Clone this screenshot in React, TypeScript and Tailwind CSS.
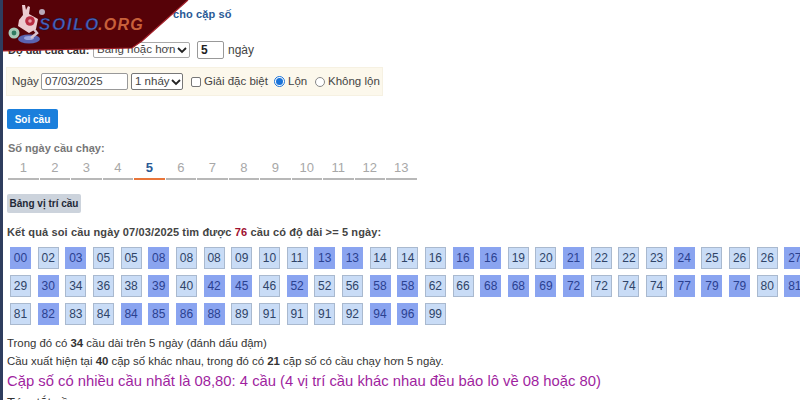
const rows: [string, boolean][][] = [
  [["00",true],["02",false],["03",true],["05",false],["05",false],["08",true],["08",false],["08",false],["09",false],["10",false],["11",false],["13",true],["13",true],["14",false],["14",false],["16",false],["16",true],["16",true],["19",false],["20",false],["21",true],["22",false],["22",false],["23",false],["24",true],["25",false],["26",false],["26",false],["27",true]],
  [["29",false],["30",true],["34",false],["36",false],["38",false],["39",true],["40",false],["42",true],["45",true],["46",false],["52",true],["52",false],["56",false],["58",true],["58",true],["62",false],["66",false],["68",true],["68",true],["69",true],["72",true],["72",false],["74",false],["74",false],["77",true],["79",true],["79",true],["80",false],["81",true]],
  [["81",false],["82",true],["83",false],["84",false],["84",true],["85",true],["86",true],["88",true],["89",false],["91",false],["91",false],["91",false],["92",false],["94",true],["96",true],["99",false]],
];
const days = [1,2,3,4,5,6,7,8,9,10,11,12,13];

function Chevron() {
  return (
    <svg width="10" height="8" viewBox="0 0 10 8" className="shrink-0">
      <path d="M1 2 L5 6 L9 2" fill="none" stroke="#222" strokeWidth="1.8" />
    </svg>
  );
}

export default function App() {
  return (
    <div className="relative w-[800px] h-[400px] overflow-hidden whitespace-nowrap bg-white font-['Liberation_Sans',Arial,sans-serif] text-[11.5px] text-[#444] border-l-[3px] border-[#2f3d5e]">
      <div className="absolute left-[-3px] top-0 z-10">
        <svg width="192" height="54" viewBox="0 0 192 54">
          <polygon points="0,0 188,0 142,41 132,48 0,51" fill="#560208" />
          <polyline points="0,51 132,48 142,41 188,0" fill="none" stroke="#a3202a" strokeWidth="1.2" />
          <circle cx="14" cy="33" r="5.5" fill="#a9c9b8" />
          <circle cx="14" cy="33" r="2.4" fill="#2f7a60" />
          <circle cx="42" cy="12" r="3" fill="#b9a8b9" />
          <ellipse cx="29" cy="39" rx="11" ry="4.5" fill="#5a63b0" />
          <ellipse cx="29" cy="38" rx="5" ry="2" fill="#9aa2dc" />
          <path d="M33 28 L37 33 L31 38" fill="none" stroke="#d9c3cf" strokeWidth="2.5" />
          <path d="M22 5 L25 5 L26 10 L28 6 L30 7 L29 14 L38 19 L36 29 L29 33 L18 26 L19 20 L23 15 Z" fill="#eccbd0" />
          <circle cx="30" cy="21" r="4.8" fill="#b92c42" />
          <circle cx="30" cy="21" r="1.8" fill="#e89aa8" />
          <text x="39" y="30" fontFamily="'Liberation Sans',Arial,sans-serif" fontWeight="700" fontStyle="italic" fontSize="17" fill="#4a60bb" stroke="#0d0d2a" strokeWidth="0.4" letterSpacing="1.6">SOILO</text>
          <text x="98" y="30" fontFamily="'Liberation Sans',Arial,sans-serif" fontWeight="700" fontStyle="italic" fontSize="16" fill="#c8603a" letterSpacing="1.3">.ORG</text>
        </svg>
      </div>

      <div className="pl-[170px] pt-[7px] h-[41px] text-[11px] font-bold text-[#2a5a96] leading-[14px] tracking-[0.1px]">cho cặp số</div>

      <div className="flex items-center h-[18px] pl-[5px]">
        <span className="w-[85px] shrink-0 font-bold text-[11px] text-[#333]">Độ dài của cầu:</span>
        <span className="flex items-center justify-between w-[97px] h-[16px] border border-[#aaa] rounded-[2px] bg-white pl-[3px] pr-[2px]">
          <span>Bằng hoặc hơn</span>
          <Chevron />
        </span>
        <span className="ml-[7px] w-[27px] h-[18px] border border-[#999] rounded-[2px] pl-[3px] font-bold text-[12px] leading-[16px] text-[#222]">5</span>
        <span className="ml-[4px] text-[12px]">ngày</span>
      </div>

      <div className="flex items-center ml-[3px] mt-[8px] w-[377px] h-[29px] bg-[#fcf8ec] border border-[#f6f1e2] pl-[5px]">
        <span className="w-[29px] shrink-0">Ngày</span>
        <span className="w-[87px] h-[17px] shrink-0 border border-[#999] rounded-[2px] bg-white pl-[3px] leading-[15px]">07/03/2025</span>
        <span className="ml-[3px] flex items-center justify-between w-[52px] h-[17px] shrink-0 border border-[#777] rounded-[2px] bg-white pl-[3px] pr-[1px]">
          <span>1 nháy</span>
          <Chevron />
        </span>
        <span className="ml-[8px] w-[10px] h-[10px] shrink-0 border border-[#777] rounded-[2px] bg-white" />
        <span className="ml-[3px] w-[70px] shrink-0">Giải đặc biệt</span>
        <span className="flex items-center justify-center w-[11px] h-[11px] shrink-0 rounded-full border border-[#1a73d8] bg-white">
          <span className="w-[7px] h-[7px] rounded-full bg-[#1a73d8]" />
        </span>
        <span className="ml-[3px] w-[27px] shrink-0">Lộn</span>
        <span className="w-[10px] h-[10px] shrink-0 rounded-full border border-[#888] bg-white" />
        <span className="ml-[3px]">Không lộn</span>
      </div>

      <div className="ml-[4px] mt-[13px] flex items-center justify-center w-[51px] h-[20px] rounded-[2px] bg-[#1a7fdc] text-white font-bold text-[10px]">Soi cầu</div>

      <div className="ml-[5px] mt-[12px] h-[14px] text-[11px] font-bold text-[#777] leading-[14px]">Số ngày cầu chạy:</div>

      <div className="flex ml-[5px] mt-[5px] gap-[1px]">
        {days.map((d) => (
          <div
            key={d}
            className={
              d === 5
                ? "w-[30.5px] h-[20px] border-b-2 border-[#e8753a] text-center text-[13px] font-bold text-[#2a5a96] leading-[16px]"
                : "w-[30.5px] h-[20px] border-b-2 border-[#b8b8b8] text-center text-[13px] text-[#a8a8a8] leading-[16px]"
            }
          >
            {d}
          </div>
        ))}
      </div>

      <div className="ml-[4px] mt-[14px] flex items-center justify-center w-[74px] h-[19px] rounded-[2px] bg-[#ccd3dc] text-[#1f2937] font-bold text-[10px]">Bảng vị trí cầu</div>

      <div className="ml-[4px] mt-[12px] h-[14px] text-[11px] font-bold text-[#444] leading-[14px] tracking-[0.13px]">
        Kết quả soi cầu ngày 07/03/2025 tìm được <span className="text-[#a01030]">76</span> cầu có độ dài &gt;= 5 ngày:
      </div>

      <div className="flex flex-col gap-[6.5px] ml-[7px] mt-[8px] w-[800px]">
        {rows.map((row, i) => (
          <div key={i} className="flex gap-[6.67px]">
            {row.map(([n, strong], j) => (
              <div
                key={j}
                className={
                  strong
                    ? "shrink-0 w-[21px] h-[21.5px] flex items-center justify-center bg-[#8aa4f0] text-[#2a4190] text-[12px]"
                    : "shrink-0 w-[21px] h-[21.5px] flex items-center justify-center bg-[#c9dcf6] border border-[#a9b9cf] text-[#2f4468] text-[12px]"
                }
              >
                {n}
              </div>
            ))}
          </div>
        ))}
      </div>

      <div className="ml-[4px] mt-[9px] h-[18px] text-[11.4px] text-[#333] leading-[18px]">
        Trong đó có <b>34</b> cầu dài trên 5 ngày (đánh dấu đậm)
      </div>
      <div className="ml-[4px] h-[18px] text-[11.4px] text-[#333] leading-[18px]">
        Cầu xuất hiện tại <b>40</b> cặp số khác nhau, trong đó có <b>21</b> cặp số có cầu chạy hơn 5 ngày.
      </div>
      <div className="ml-[4px] h-[22px] text-[14.8px] text-[#a01fa0] leading-[22px]">
        Cặp số có nhiều cầu nhất là 08,80: 4 cầu (4 vị trí cầu khác nhau đều báo lô về 08 hoặc 80)
      </div>
      <div className="ml-[4px] mt-[3px] text-[13px] text-[#333] leading-[16px]">Tóm tắt cầu</div>
    </div>
  );
}
